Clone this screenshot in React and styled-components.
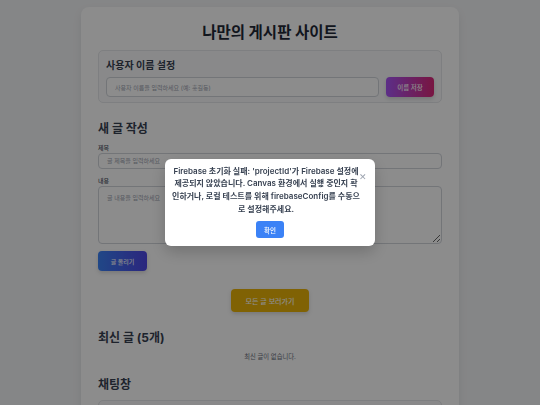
import React, { useState } from "react";
import styled, { createGlobalStyle } from "styled-components";

const GlobalStyle = createGlobalStyle`
  html, body {
    margin: 0;
    padding: 0;
    background: #f3f4f6;
    font-family: "Inter", "Noto Sans CJK KR", sans-serif;
    color: #1f2937;
  }
  * { box-sizing: border-box; }
`;

const Page = styled.div`
  padding: 7px 0 20px;
`;

const Card = styled.main`
  width: 378px;
  margin: 0 auto;
  background: #ffffff;
  border-radius: 8px;
  box-shadow: 0 4px 10px rgba(0, 0, 0, 0.08);
  padding: 16px 17px 20px;
`;

const Title = styled.h1`
  margin: 0 0 7px;
  font-size: 15.5px;
  line-height: 20px;
  font-weight: 700;
  text-align: center;
  color: #1f2937;
`;

const UserBox = styled.section`
  background: #f9fafb;
  border: 1px solid #e5e7eb;
  border-radius: 5px;
  padding: 7px 7px 5px;
`;

const BoxHeading = styled.h2`
  margin: 0 0 5px;
  font-size: 10px;
  line-height: 14px;
  font-weight: 700;
  color: #374151;
`;

const Row = styled.div`
  display: flex;
  gap: 7px;
`;

const Input = styled.input`
  display: block;
  flex: 1;
  width: 100%;
  height: ${(p) => p.h || "16px"};
  border: 1px solid #d1d5db;
  border-radius: 4px;
  background: #ffffff;
  padding: 0 8px;
  font-family: inherit;
  font-size: 6px;
  color: #1f2937;
  outline: none;
  &::placeholder { color: #9ca3af; }
`;

const TextArea = styled.textarea`
  display: block;
  width: 100%;
  height: 58px;
  border: 1px solid #d1d5db;
  border-radius: 4px;
  background: #ffffff;
  padding: 6px 8px;
  font-family: inherit;
  font-size: 6px;
  resize: vertical;
  outline: none;
  &::placeholder { color: #9ca3af; }
`;

const GradientButton = styled.button`
  display: block;
  height: ${(p) => p.h || "20px"};
  width: ${(p) => p.w || "auto"};
  border: none;
  border-radius: 4px;
  background: ${(p) => p.bg};
  color: #ffffff;
  font-family: inherit;
  font-size: ${(p) => p.fs || "6.5px"};
  font-weight: 500;
  box-shadow: 0 2px 4px rgba(0, 0, 0, 0.15);
  cursor: pointer;
  padding: 0;
`;

const SectionHeading = styled.h2`
  margin: ${(p) => p.mt || "18px"} 0 0;
  font-size: 12px;
  line-height: 16px;
  font-weight: 700;
  color: #374151;
`;

const Label = styled.label`
  display: block;
  margin: ${(p) => p.mt || "5px"} 0 1px;
  font-size: 6px;
  line-height: 9px;
  font-weight: 500;
  color: #4b5563;
`;

const Actions = styled.div`
  margin-top: 7px;
`;

const Center = styled.div`
  display: flex;
  justify-content: center;
  margin-top: 18px;
`;

const Empty = styled.p`
  margin: 6px 0 0;
  text-align: center;
  font-size: 6.3px;
  line-height: 10px;
  color: #6b7280;
`;

const ChatBox = styled.div`
  margin-top: 7px;
  height: 120px;
  border: 1px solid #e5e7eb;
  border-radius: 5px;
  background: #f9fafb;
`;

const Overlay = styled.div`
  position: fixed;
  inset: 0;
  background: rgba(0, 0, 0, 0.45);
  display: flex;
  align-items: center;
  justify-content: center;
`;

const Modal = styled.div`
  position: relative;
  width: 210px;
  background: #ffffff;
  border-radius: 6px;
  box-shadow: 0 6px 16px rgba(0, 0, 0, 0.2);
  padding: 6px 15px 8px 7px;
  display: flex;
  flex-direction: column;
  align-items: center;
`;

const ModalText = styled.p`
  margin: 0;
  text-align: center;
  font-size: 8px;
  line-height: 12.6px;
  font-weight: 600;
  color: #374151;
`;

const CloseButton = styled.button`
  position: absolute;
  top: 13px;
  right: 8px;
  border: none;
  background: none;
  padding: 0;
  color: #9ca3af;
  font-size: 9px;
  line-height: 10px;
  cursor: pointer;
`;

const ConfirmButton = styled.button`
  margin: 6px 0 0 8px;
  width: 28px;
  height: 17px;
  border: none;
  border-radius: 3px;
  background: #3b82f6;
  color: #ffffff;
  font-family: inherit;
  font-size: 6.5px;
  font-weight: 500;
  padding: 0;
  cursor: pointer;
`;

export default function App() {
  const [open, setOpen] = useState(true);

  return (
    <>
      <GlobalStyle />
      <Page>
        <Card>
          <Title>나만의 게시판 사이트</Title>

          <UserBox>
            <BoxHeading>사용자 이름 설정</BoxHeading>
            <Row>
              <Input h="20px" placeholder="사용자 이름을 입력하세요 (예: 홍길동)" />
              <GradientButton
                w="48px"
                bg="linear-gradient(to right, #a855f7, #db2777)"
              >
                이름 저장
              </GradientButton>
            </Row>
          </UserBox>

          <SectionHeading>새 글 작성</SectionHeading>
          <Label mt="5.5px">제목</Label>
          <Input placeholder="글 제목을 입력하세요" />
          <Label mt="7.5px">내용</Label>
          <TextArea placeholder="글 내용을 입력하세요" />
          <Actions>
            <GradientButton
              w="49px"
              fs="6px"
              bg="linear-gradient(to right, #3b82f6, #4f46e5)"
            >
              글 올리기
            </GradientButton>
          </Actions>

          <Center>
            <GradientButton w="78px" h="23px" fs="7px" bg="#eab308">
              모든 글 보러가기
            </GradientButton>
          </Center>

          <SectionHeading>최신 글 (5개)</SectionHeading>
          <Empty>최신 글이 없습니다.</Empty>

          <SectionHeading mt="15px">채팅창</SectionHeading>
          <ChatBox />
        </Card>
      </Page>

      {open && (
        <Overlay>
          <Modal>
            <CloseButton onClick={() => setOpen(false)}>✕</CloseButton>
            <ModalText>
              Firebase 초기화 실패: 'projectId'가 Firebase 설정에 제공되지
              않았습니다. Canvas 환경에서 실행 중인지 확인하거나, 로컬 테스트를
              위해 firebaseConfig를 수동으로 설정해주세요.
            </ModalText>
            <ConfirmButton onClick={() => setOpen(false)}>확인</ConfirmButton>
          </Modal>
        </Overlay>
      )}
    </>
  );
}
